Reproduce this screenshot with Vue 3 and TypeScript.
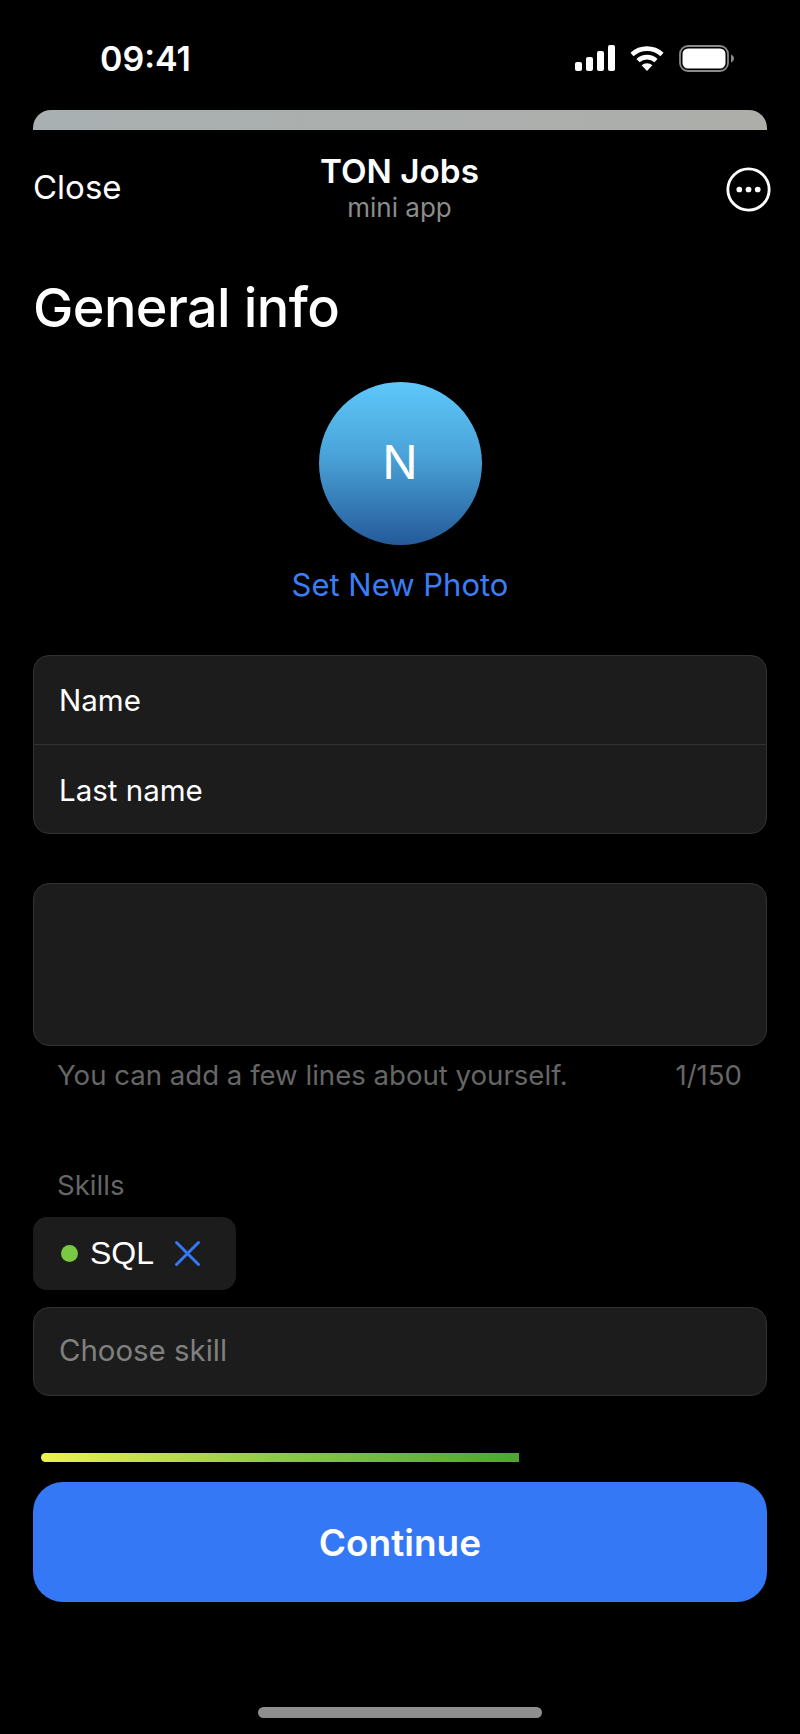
<script setup lang="ts">
import { ref } from 'vue'

const skills = ref([{ name: 'SQL', color: '#7ac943' }])
const progress = ref(66.6)
</script>

<template>
  <div class="screen">
    <div class="status">
      <span class="time">09:41</span>
      <div class="status-icons">
        <svg width="40" height="26" viewBox="0 0 40 26" fill="#fff">
          <rect x="0" y="17" width="7" height="9" rx="2" />
          <rect x="11" y="12" width="7" height="14" rx="2" />
          <rect x="22" y="6" width="7" height="20" rx="2" />
          <rect x="33" y="0" width="7" height="26" rx="2" />
        </svg>
        <svg width="34" height="25" viewBox="0 0 34 25" fill="none" stroke="#fff" stroke-width="4.6">
          <path d="M2 8.5C10.5 .7 23.5 .7 32 8.5" />
          <path d="M8 14.6C13.2 9.9 20.8 9.9 26 14.6" />
          <path d="M17 25L11.6 19.3C14.8 16.6 19.2 16.6 22.4 19.3Z" fill="#fff" stroke="none" />
        </svg>
        <svg width="55" height="27" viewBox="0 0 55 27">
          <rect x="1" y="1" width="48" height="25" rx="8" fill="none" stroke="#8a8a8a" stroke-width="1.8" />
          <rect x="3.5" y="3.5" width="43" height="20" rx="5.5" fill="#fff" />
          <path d="M52 9.5C53.8 10.2 55 11.7 55 13.5C55 15.3 53.8 16.8 52 17.5Z" fill="#8a8a8a" />
        </svg>
      </div>
    </div>

    <div class="sheet-peek"></div>

    <header class="nav">
      <span class="close">Close</span>
      <div class="nav-title">
        <div class="app-name">TON Jobs</div>
        <div class="app-sub">mini app</div>
      </div>
      <svg class="more" width="45" height="45" viewBox="0 0 44 44">
        <circle cx="22" cy="22" r="20.2" fill="none" stroke="#fff" stroke-width="2.8" />
        <circle cx="13" cy="22" r="2.8" fill="#fff" />
        <circle cx="22" cy="22" r="2.8" fill="#fff" />
        <circle cx="31" cy="22" r="2.8" fill="#fff" />
      </svg>
    </header>

    <main class="content">
      <h1 class="title">General info</h1>

      <div class="photo">
        <div class="avatar">N</div>
        <span class="set-photo">Set New Photo</span>
      </div>

      <div class="group">
        <div class="row">Name</div>
        <div class="row row-last">Last name</div>
      </div>

      <div class="textarea"></div>
      <div class="hint">
        <span>You can add a few lines about yourself.</span>
        <span>1/150</span>
      </div>

      <div class="skills-label">Skills</div>
      <div class="chips">
        <div v-for="skill in skills" :key="skill.name" class="chip">
          <span class="dot" :style="{ backgroundColor: skill.color }"></span>
          <span class="chip-name">{{ skill.name }}</span>
          <svg width="27" height="27" viewBox="0 0 27 27" fill="none" stroke="#3478f6" stroke-width="3" stroke-linecap="round">
            <path d="M2.5 2.5L24.5 24.5M24.5 2.5L2.5 24.5" />
          </svg>
        </div>
      </div>
      <div class="select">Choose skill</div>
    </main>

    <footer class="footer">
      <div class="progress">
        <div class="progress-fill" :style="{ width: progress + '%' }"></div>
      </div>
      <button class="continue" type="button">Continue</button>
      <div class="home-bar"></div>
    </footer>
  </div>
</template>

<style>
html,
body {
  margin: 0;
  background: #000;
}
</style>

<style scoped>
.screen {
  width: 800px;
  height: 1734px;
  background: #000;
  color: #fff;
  font-family: Inter, 'Liberation Sans', sans-serif;
  display: flex;
  flex-direction: column;
  overflow: hidden;
}

.status {
  height: 110px;
  box-sizing: border-box;
  padding: 39px 66px 0 100px;
  display: flex;
  justify-content: space-between;
  align-items: flex-start;
}

.time {
  font-size: 34px;
  line-height: 40px;
  font-weight: 600;
}

.status-icons {
  display: flex;
  align-items: center;
  gap: 15px;
  height: 40px;
  margin-top: -1px;
}

.sheet-peek {
  height: 20px;
  margin: 0 33px;
  border-radius: 18px 18px 0 0;
  background: linear-gradient(90deg, #a9b0b1, #adaeaa);
  flex: none;
}

.nav {
  position: relative;
  height: 95px;
  box-sizing: border-box;
  padding: 20px 33px 0;
  display: flex;
  align-items: center;
  justify-content: space-between;
  flex: none;
}

.close {
  font-size: 33px;
  margin-top: -2px;
}

.nav-title {
  position: absolute;
  left: 0;
  right: 1px;
  top: 21px;
  text-align: center;
}

.app-name {
  font-size: 33.3px;
  line-height: 40px;
  font-weight: 600;
}

.app-sub {
  margin-top: 1px;
  font-size: 26px;
  line-height: 32px;
  color: #8c8c8c;
}

.more {
  margin-right: -4px;
  margin-top: 4px;
}

.content {
  padding: 0 33px;
  flex: 1;
  display: flex;
  flex-direction: column;
}

.title {
  margin: 51px 0 0;
  font-size: 54px;
  line-height: 64px;
  font-weight: 500;
  letter-spacing: -0.6px;
}

.photo {
  margin-top: 42px;
  display: flex;
  flex-direction: column;
  align-items: center;
}

.avatar {
  width: 163px;
  height: 163px;
  box-sizing: border-box;
  padding-bottom: 4px;
  border-radius: 50%;
  background: linear-gradient(180deg, #5ec8fa, #4aa3d8 45%, #245a99);
  display: flex;
  align-items: center;
  justify-content: center;
  font-size: 47px;
}

.set-photo {
  margin-top: 20px;
  font-size: 31px;
  line-height: 40px;
  color: #3a7df5;
}

.group {
  margin-top: 50px;
  background: #1c1c1c;
  border: 1.5px solid #323232;
  border-radius: 16px;
  box-sizing: border-box;
  height: 179px;
  flex: none;
}

.row {
  height: 89px;
  box-sizing: border-box;
  padding: 0 25px;
  display: flex;
  align-items: center;
  font-size: 29.5px;
  border-bottom: 1.5px solid #323232;
}

.row-last {
  border-bottom: none;
}

.textarea {
  margin-top: 49px;
  height: 163px;
  box-sizing: border-box;
  background: #1c1c1c;
  border: 1.5px solid #323232;
  border-radius: 16px;
  flex: none;
}

.hint {
  margin-top: 13px;
  padding: 0 25px 0 24px;
  display: flex;
  justify-content: space-between;
  font-size: 27.6px;
  line-height: 32px;
  color: #666;
}

.skills-label {
  margin-top: 78px;
  padding: 0 24px;
  font-size: 27.6px;
  line-height: 32px;
  color: #666;
}

.chips {
  margin-top: 16px;
  display: flex;
  gap: 10px;
}

.chip {
  height: 73px;
  width: 203px;
  box-sizing: border-box;
  padding: 0 30px 0 28px;
  background: #1c1c1c;
  border-radius: 14px;
  display: flex;
  align-items: center;
}

.dot {
  width: 17px;
  height: 17px;
  border-radius: 50%;
}

.chip-name {
  margin-left: 12px;
  margin-right: 20px;
  font-size: 32px;
  font-family: 'Liberation Sans', sans-serif;
}

.select {
  margin-top: 17px;
  height: 89px;
  box-sizing: border-box;
  padding: 0 25px 2px;
  display: flex;
  align-items: center;
  background: #1c1c1c;
  border: 1.5px solid #323232;
  border-radius: 16px;
  font-size: 29.4px;
  color: #808080;
}

.footer {
  padding: 0 33px;
  height: 281px;
  box-sizing: border-box;
  flex: none;
  display: flex;
  flex-direction: column;
}

.progress {
  height: 9px;
  margin: 0 8px;
  flex: none;
}

.progress-fill {
  height: 100%;
  border-radius: 5px 0 0 5px;
  background: linear-gradient(90deg, #eef24f, #8ccb42 50%, #4fa535);
}

.continue {
  margin-top: 20px;
  height: 120px;
  padding-top: 1px;
  flex: none;
  border: none;
  border-radius: 30px;
  background: #3478f6;
  color: #fff;
  font-family: Inter, 'Liberation Sans', sans-serif;
  font-size: 37px;
  font-weight: 600;
}

.home-bar {
  width: 284px;
  height: 11px;
  margin: 105px auto 0;
  border-radius: 5.5px;
  background: #8e8e8e;
  flex: none;
}
</style>
